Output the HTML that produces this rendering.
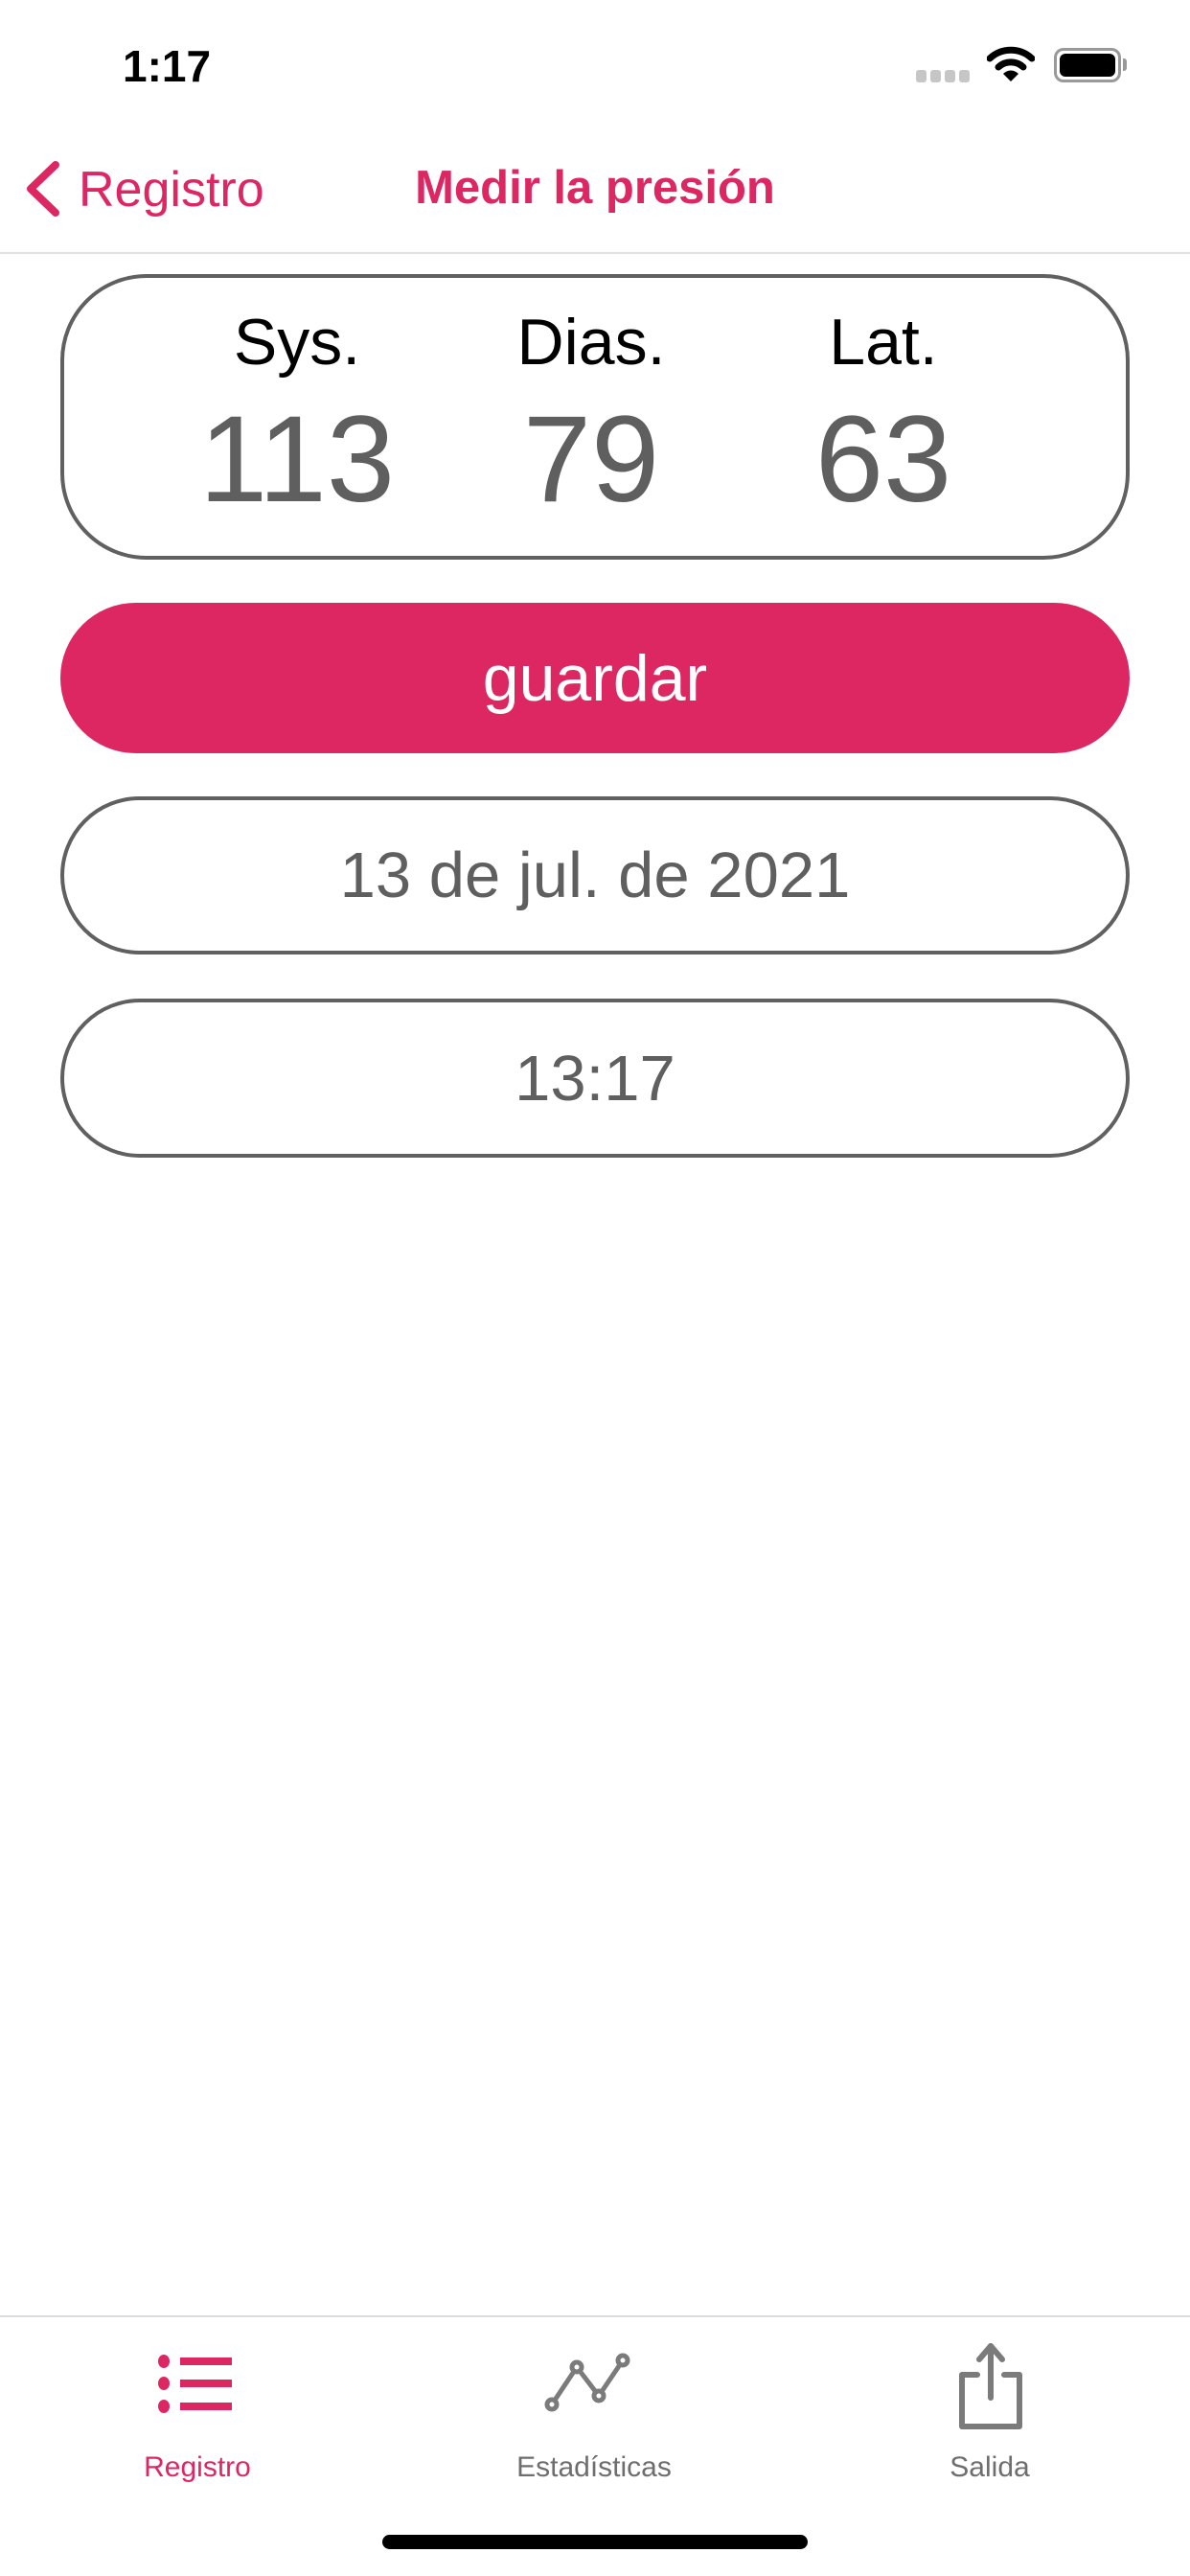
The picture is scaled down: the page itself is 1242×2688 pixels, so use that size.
<!DOCTYPE html>
<html><head><meta charset="utf-8"><style>
*{margin:0;padding:0;box-sizing:border-box}
body{width:1242px;height:2688px;background:#fff;position:relative;overflow:hidden;font-family:"Liberation Sans",sans-serif}
.a{position:absolute}
.pill{position:absolute;left:63px;width:1116px;border:4px solid #606060;border-radius:84px;display:flex;align-items:center;justify-content:center;color:#5f5f5f;font-size:67px}
.lab{position:absolute;width:300px;text-align:center;transform:translateX(-150px)}
</style></head><body>
<div class="a" style="left:128px;top:42px;font-size:46px;font-weight:bold;color:#000">1:17</div>
<div class="a" style="left:956px;top:73px;display:flex;gap:4px">
<div style="width:11px;height:13px;background:#c6c6c6;border-radius:3px"></div><div style="width:11px;height:13px;background:#c6c6c6;border-radius:3px"></div><div style="width:11px;height:13px;background:#c6c6c6;border-radius:3px"></div><div style="width:11px;height:13px;background:#c6c6c6;border-radius:3px"></div></div>
<svg class="a" style="left:1030px;top:48px" width="50" height="38" viewBox="0 0 50 38"><path d="M3 13 A32 32 0 0 1 47 13" stroke="#000" stroke-width="7" fill="none" stroke-linecap="round"/><path d="M12 22 A19 19 0 0 1 38 22" stroke="#000" stroke-width="7" fill="none" stroke-linecap="round"/><path d="M25 37 L17 29 A11 11 0 0 1 33 29 Z" fill="#000"/></svg>
<div class="a" style="left:1100px;top:50px;width:70px;height:36px;border:3px solid #999;border-radius:10px;padding:3px"><div style="width:100%;height:100%;background:#000;border-radius:6px"></div></div>
<div class="a" style="left:1172px;top:61px;width:4px;height:13px;background:#999;border-radius:0 3px 3px 0"></div>
<svg class="a" style="left:22px;top:166px" width="44" height="62" viewBox="0 0 44 62"><path d="M36 6 L10 31 L36 56" stroke="#dc2763" stroke-width="8" fill="none" stroke-linecap="round" stroke-linejoin="round"/></svg>
<div class="a" style="left:82px;top:168px;font-size:52px;color:#dc2763">Registro</div>
<div class="a" style="left:0;width:1242px;top:168px;text-align:center;font-size:49px;font-weight:bold;color:#dc2763">Medir la presión</div>
<div class="a" style="left:0;top:263px;width:1242px;height:2px;background:#e0e0e0"></div>
<div class="a" style="left:63px;top:286px;width:1116px;height:298px;border:4px solid #606060;border-radius:90px"></div>
<div class="lab" style="left:310px;top:318px;font-size:68px;color:#000">Sys.</div>
<div class="lab" style="left:617px;top:318px;font-size:68px;color:#000">Dias.</div>
<div class="lab" style="left:922px;top:318px;font-size:68px;color:#000">Lat.</div>
<div class="lab" style="left:310px;top:400px;font-size:128px;color:#5f5f5f;line-height:160px">113</div>
<div class="lab" style="left:617px;top:400px;font-size:128px;color:#5f5f5f;line-height:160px">79</div>
<div class="lab" style="left:922px;top:400px;font-size:128px;color:#5f5f5f;line-height:160px">63</div>
<div class="a" style="left:63px;top:629px;width:1116px;height:157px;border-radius:80px;background:#dc2763;color:#fff;font-size:68px;display:flex;align-items:center;justify-content:center">guardar</div>
<div class="pill" style="top:831px;height:165px">13 de jul. de 2021</div>
<div class="pill" style="top:1042px;height:166px">13:17</div>
<div class="a" style="left:0;top:2416px;width:1242px;height:2px;background:#dcdcdc"></div>
<svg class="a" style="left:160px;top:2450px" width="90" height="80" viewBox="0 0 90 80"><g fill="#dc2763"><ellipse cx="11" cy="14" rx="6" ry="7"/><ellipse cx="11" cy="37" rx="6" ry="7"/><ellipse cx="11" cy="61" rx="6" ry="7"/><rect x="28" y="10" width="54" height="8"/><rect x="28" y="33" width="54" height="8"/><rect x="28" y="57" width="54" height="8"/></g></svg>
<svg class="a" style="left:568px;top:2455px" width="100" height="70" viewBox="0 0 100 70"><g stroke="#7b7b7b" stroke-width="5" fill="none"><path d="M8 54 L34 15 L57 45 L82 8"/><circle cx="8" cy="54" r="5" fill="#fff"/><circle cx="34" cy="15" r="5" fill="#fff"/><circle cx="57" cy="45" r="5" fill="#fff"/><circle cx="82" cy="8" r="5" fill="#fff"/></g></svg>
<svg class="a" style="left:994px;top:2440px" width="80" height="100" viewBox="0 0 80 100"><g stroke="#7b7b7b" stroke-width="6" fill="none" stroke-linecap="round" stroke-linejoin="round"><path d="M40 8 V62"/><path d="M28 22 L40 8 L52 22"/><path d="M26 38 H10 V92 H70 V38 H54"/></g></svg>
<div class="lab" style="left:206px;top:2558px;font-size:30px;color:#dc2763">Registro</div>
<div class="lab" style="left:620px;top:2558px;font-size:30px;color:#6e6e6e">Estadísticas</div>
<div class="lab" style="left:1033px;top:2558px;font-size:30px;color:#6e6e6e">Salida</div>
<div class="a" style="left:399px;top:2645px;width:444px;height:15px;background:#000;border-radius:8px"></div>
</body></html>
